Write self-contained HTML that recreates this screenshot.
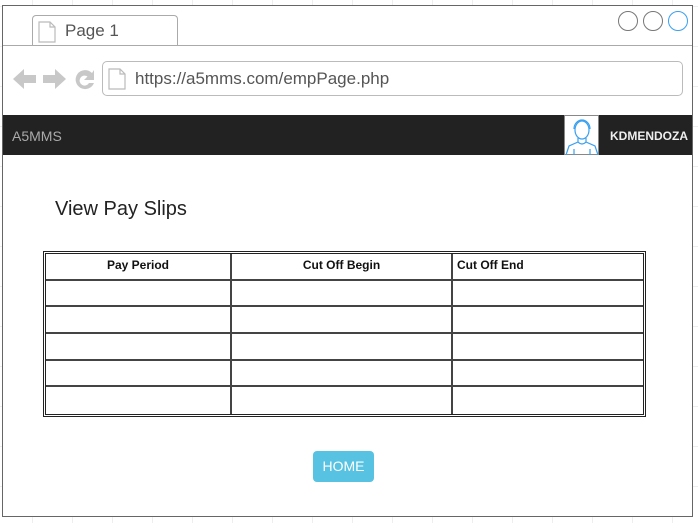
<!DOCTYPE html>
<html><head><meta charset="utf-8"><style>
*{margin:0;padding:0;box-sizing:border-box}
body{width:698px;height:523px;position:relative;overflow:hidden;font-family:"Liberation Sans",Arial,sans-serif;
background-color:#fff;background-image:linear-gradient(#eee 1px,transparent 1px),linear-gradient(90deg,#eee 1px,transparent 1px);background-size:40px 40px;background-position:-8px 6px}
.frame{position:absolute;left:2px;top:5px;width:691px;height:512px;border:1px solid #666;background:#fff}
.abs{position:absolute}
.tab{left:32px;top:15px;width:146px;height:31px;border:1px solid #aaa;border-bottom:none;border-radius:4px 4px 0 0;background:#fff}
.tabline{left:3px;top:45px;width:689px;height:1px;background:#aaa}
.circ{top:11px;width:20px;height:20px;border-radius:50%;border:1px solid #777}
.url{left:102px;top:61px;width:581px;height:35px;border:1px solid #bbb;border-radius:5px}
.nav{left:3px;top:115px;width:689px;height:40px;background:#222}
table{position:absolute;left:43px;top:251px;width:603px;height:166px;border:3px double #222;border-collapse:separate;border-spacing:0}
td{border:2px solid #444;font-size:12px;color:#111;height:26px}
td{border-top:none;border-left:none}
tr td:last-child{border-right:none}
tr:last-child td{border-bottom:none}
tr:first-child td{font-weight:bold;padding-bottom:2px}
.btn{left:313px;top:451px;width:61px;height:31px;background:#57c2e1;border-radius:4px;color:#fff;font-size:14px;text-align:center;line-height:31px}
</style></head><body>
<div class="frame"></div>
<div class="abs tab"></div>
<div class="abs tabline"></div>
<svg class="abs" style="left:38px;top:21px" width="18" height="22"><path d="M1 1h11l5 5v15H1z M12 1v5h5" fill="none" stroke="#bbb" stroke-width="1.2"/></svg>
<div class="abs" style="left:65px;top:21px;font-size:17px;color:#555">Page 1</div>
<div class="abs circ" style="left:618px"></div>
<div class="abs circ" style="left:643px"></div>
<div class="abs circ" style="left:668px;border-color:#3aa0f0"></div>
<svg class="abs" style="left:12px;top:67px" width="86" height="24">
<path d="M1 12l11-10v6h12v8H12v6z" fill="#c8c8c8"/>
<path d="M54 12l-11-10v6H31v8h12v6z" fill="#c8c8c8"/>
<path d="M80 6a9.5 9.5 0 1 0 2 10h-5a5 5 0 1 1-1.5-6.5L72 13h10V3z" fill="#c8c8c8"/>
</svg>
<div class="abs url"></div>
<svg class="abs" style="left:108px;top:68px" width="18" height="22"><path d="M1 1h11l5 5v15H1z M12 1v5h5" fill="none" stroke="#bbb" stroke-width="1.2"/></svg>
<div class="abs" style="left:135px;top:69px;font-size:17px;color:#555">https://a5mms.com/empPage.php</div>
<div class="abs nav"></div>
<div class="abs" style="left:12px;top:128px;font-size:14px;color:#aaa">A5MMS</div>
<div class="abs" style="left:564px;top:115px;width:35px;height:40px;background:#fff;border:1px solid #888"></div>
<svg class="abs" style="left:565px;top:116px" width="34" height="39"><g fill="none" stroke="#3aa0f0" stroke-width="1.2"><ellipse cx="17" cy="14" rx="7" ry="9"/><path d="M9 13a8 9 0 0 1 16 0"/><path d="M13 22v4l-9 4-3 9M21 22v4l9 4 3 9M13 26q4 4 8 0M9 33v6M25 33v6"/></g></svg>
<div class="abs" style="left:610px;top:129px;font-size:12px;font-weight:bold;color:#eee">KDMENDOZA</div>
<div class="abs" style="left:55px;top:198px;font-size:20px;color:#222">View Pay Slips</div>
<table>
<tr><td style="width:186px;text-align:center">Pay Period</td><td style="width:221px;text-align:center">Cut Off Begin</td><td style="padding-left:4px">Cut Off End</td></tr>
<tr><td></td><td></td><td></td></tr>
<tr><td></td><td></td><td></td></tr>
<tr><td></td><td></td><td></td></tr>
<tr><td></td><td></td><td></td></tr>
<tr><td></td><td></td><td></td></tr>
</table>
<div class="abs btn">HOME</div>
</body></html>
